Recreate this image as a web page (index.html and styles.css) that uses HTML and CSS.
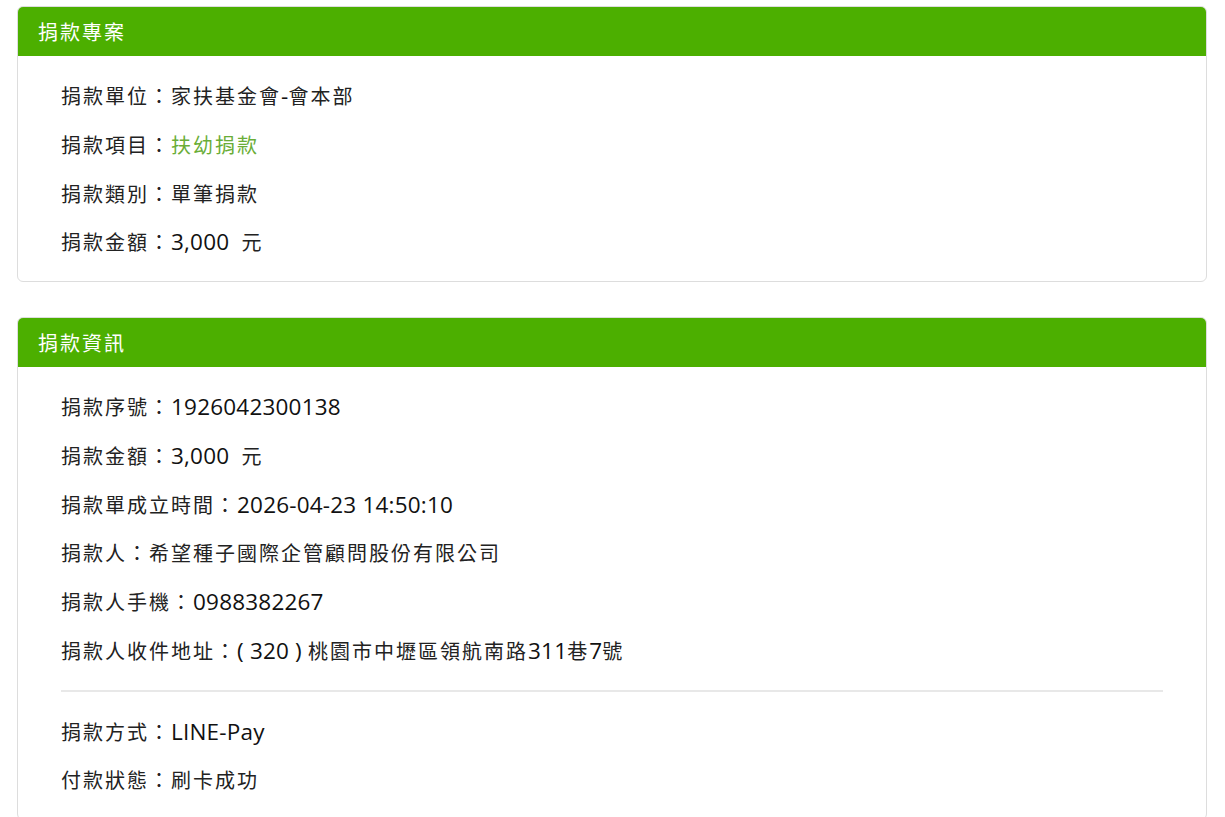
FILE: index.html
```html
<!DOCTYPE html>
<html lang="zh-Hant">
<head>
<meta charset="utf-8">
<title>捐款明細</title>
<link rel="stylesheet" href="styles.css">
</head>
<body>
<div class="page">
  <section class="card">
    <div class="card-header">捐款專案</div>
    <div class="card-body">
      <div class="row">捐款單位：家扶基金會<span class="lat">-</span>會本部</div>
      <div class="row">捐款項目：<span class="hl">扶幼捐款</span></div>
      <div class="row">捐款類別：單筆捐款</div>
      <div class="row">捐款金額：<span class="lat">3,000&nbsp; </span>元</div>
    </div>
  </section>
  <section class="card">
    <div class="card-header">捐款資訊</div>
    <div class="card-body">
      <div class="row">捐款序號：<span class="lat">1926042300138</span></div>
      <div class="row">捐款金額：<span class="lat">3,000&nbsp; </span>元</div>
      <div class="row">捐款單成立時間：<span class="lat">2026-04-23 14:50:10</span></div>
      <div class="row">捐款人：希望種子國際企管顧問股份有限公司</div>
      <div class="row">捐款人手機：<span class="lat">0988382267</span></div>
      <div class="row">捐款人收件地址：<span class="lat">( 320 ) </span>桃園市中壢區領航南路<span class="lat">311</span>巷<span class="lat">7</span>號</div>
      <hr class="divider">
      <div class="row">捐款方式：<span class="lat">LINE-Pay</span></div>
      <div class="row">付款狀態：刷卡成功</div>
    </div>
  </section>
</div>
</body>
</html>
```
FILE: styles.css
```css
html, body {
  margin: 0;
  padding: 0;
  background: #ffffff;
}
body {
  font-family: "Noto Sans CJK TC", "Noto Sans", sans-serif;
  color: #222222;
  overflow: hidden;
}
.page {
  padding: 6px 18px 0 17px;
  display: flex;
  flex-direction: column;
  gap: 35px;
}
.card {
  border: 1px solid #dddddd;
  border-radius: 6px;
  overflow: hidden;
}
.card-header {
  background: #4caf00;
  color: #ffffff;
  height: 50px;
  line-height: 51px;
  padding: 0 21px;
  font-size: 20px;
  letter-spacing: 2px;
  margin: -1px -1px 0 -1px;
}
.card-body {
  padding: 16px 43px 14px;
}
.row {
  height: 48.75px;
  line-height: 48.75px;
  font-size: 20px;
  letter-spacing: 2px;
  white-space: nowrap;
}
.lat {
  font-family: "Open Sans", "Noto Sans", sans-serif;
  font-size: 22.5px;
  line-height: 20px;
  letter-spacing: 0.2px;
  color: #111111;
}
.hl {
  color: #6aad37;
}
.divider {
  border: 0;
  border-top: 2px solid #e8e8e8;
  margin: 14px 0 16px;
  height: 0;
}
```
